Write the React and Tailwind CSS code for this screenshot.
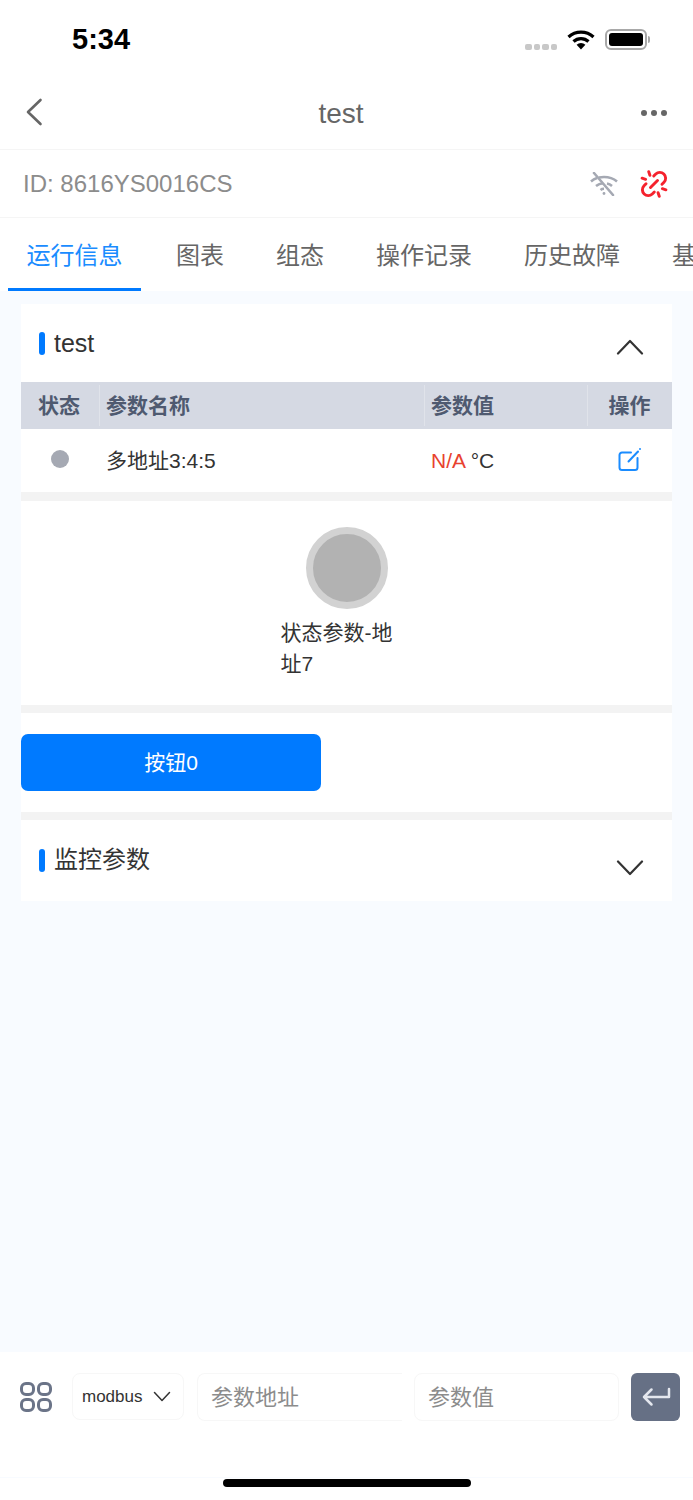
import React from "react";

const font = "font-['Liberation_Sans','Noto_Sans_CJK_SC',sans-serif]";

function StatusBar() {
  return (
    <div className="h-[75px] flex items-start justify-between pl-[72px] pr-[43px] pt-[23px]">
      <span className="text-[29px] leading-[33px] font-bold text-black">5:34</span>
      <div className="flex items-start pt-[6px]">
        <div className="flex gap-[2px] mt-[15px]">
          <span className="w-[6.5px] h-[6px] rounded-[2px] bg-[#c8c8c8]" />
          <span className="w-[6.5px] h-[6px] rounded-[2px] bg-[#c8c8c8]" />
          <span className="w-[6.5px] h-[6px] rounded-[2px] bg-[#c8c8c8]" />
          <span className="w-[6.5px] h-[6px] rounded-[2px] bg-[#c8c8c8]" />
        </div>
        <svg width="28" height="21" viewBox="0 0 28 21" className="ml-[10px]">
          <path d="M1.5 8a18.5 18.5 0 0 1 25 0" fill="none" stroke="#000" strokeWidth="3.2" />
          <path d="M6.5 12.5a11 11 0 0 1 15 0" fill="none" stroke="#000" strokeWidth="3.2" />
          <path d="M14 20.5l-4.4-4.7a6.2 6.2 0 0 1 8.8 0z" fill="#000" />
        </svg>
        <div className="flex items-center ml-[10px]">
          <div className="w-[42px] h-[21px] rounded-[6px] border-2 border-[#a8a8a8] p-[2px]">
            <div className="w-full h-full rounded-[3px] bg-black" />
          </div>
          <span className="w-[2px] h-[7px] rounded-r-[2px] bg-[#a8a8a8] ml-[1px]" />
        </div>
      </div>
    </div>
  );
}

function NavBar() {
  return (
    <div className="h-[75px] flex items-center justify-between border-b border-[#f5f5f5] pl-[25px] pr-[26px]">
      <svg width="18" height="28" viewBox="0 0 18 28">
        <path d="M15.5 2 3 14l12.5 12" fill="none" stroke="#666" strokeWidth="2.6" strokeLinecap="round" strokeLinejoin="round" />
      </svg>
      <span className="text-[28px] text-[#666] pt-[3px] pr-[2px]">test</span>
      <div className="flex gap-[4px] w-[26px] pt-[1px]">
        <span className="w-[6px] h-[6px] shrink-0 rounded-full bg-[#666]" />
        <span className="w-[6px] h-[6px] shrink-0 rounded-full bg-[#666]" />
        <span className="w-[6px] h-[6px] shrink-0 rounded-full bg-[#666]" />
      </div>
    </div>
  );
}

function WifiSlash() {
  return (
    <svg width="28" height="24" viewBox="0 0 28 24" fill="none" stroke="#a5a9b3" strokeWidth="2.6">
      <path d="M1 9.5C4.5 6.5 9 5 14 5c5 0 9.5 1.5 13 4.5" strokeDasharray="7 2 30" />
      <path d="M6 14c2-1.6 4.5-2.6 7-2.8M17 11.6c2 .4 3.700 1.300 5 2.400" />
      <path d="M10.500 18c1-.8 2.200-1.200 3.500-1.200" />
      <circle cx="14" cy="21.500" r="1.400" fill="#a5a9b3" stroke="none" />
      <path d="M4 1l19 22" strokeLinecap="round" />
    </svg>
  );
}

function BrokenLink() {
  return (
    <svg width="28" height="28" viewBox="0 0 24 24" fill="none" stroke="#f5222d" strokeWidth="2.5" strokeLinecap="round" strokeLinejoin="round">
      <path d="m18.840 12.250 1.720-1.710a5 5 0 0 0-.120-7.070 5 5 0 0 0-6.950 0l-1.720 1.710" />
      <path d="m5.170 11.750-1.710 1.710a5 5 0 0 0 .120 7.070 5 5 0 0 0 6.950 0l1.710-1.710" />
      <path d="M9 15l6-6" />
      <path d="M7.500 1.500 8.500 4.500M1.800 7 4.800 8" />
      <path d="M15.500 19.500 16.500 22.500M19.200 16 22.200 17" />
    </svg>
  );
}

function IdRow() {
  return (
    <div className="h-[68px] flex items-center justify-between border-b border-[#f5f5f5] pl-[23px] pr-[25px]">
      <span className="text-[24px] text-[#8c8c8c]">ID: 8616YS0016CS</span>
      <div className="flex items-center gap-[22px]">
        <WifiSlash />
        <BrokenLink />
      </div>
    </div>
  );
}

function Tabs() {
  const tabs = ["图表", "组态", "操作记录", "历史故障", "基本信息"];
  return (
    <div className="h-[73px] flex overflow-hidden pl-[8px]">
      <div className="w-[133px] shrink-0 h-full flex items-center justify-center border-b-[3px] border-[#007aff] text-[24px] text-[#1a8cff] pt-[6px]">
        运行信息
      </div>
      {tabs.map((t) => (
        <div key={t} className="shrink-0 h-full flex items-center pl-[35px] pr-[17px] text-[24px] text-[#666] pt-[3px]">
          {t}
        </div>
      ))}
    </div>
  );
}

function Chevron({ up, className }) {
  return (
    <svg width="28" height="16" viewBox="0 0 28 16" className={className}>
      <path d={up ? "M2 14.500 14 2l12 12.500" : "M2 1.500 14 14 26 1.500"} fill="none" stroke="#333" strokeWidth="2.2" strokeLinecap="round" strokeLinejoin="round" />
    </svg>
  );
}

function SectionTitle({ title, open }) {
  return (
    <div className="h-full flex items-start justify-between pl-[18px] pr-[28px]">
      <div className={open ? "flex items-center gap-[9px] pt-[24px]" : "flex items-center gap-[9px] pt-[25px]"}>
        <span className="w-[6px] h-[23px] rounded-full bg-[#007aff]" />
        <span className={open ? "text-[25px] leading-[30px] text-[#333]" : "text-[24px] leading-[30px] text-[#333]"}>{title}</span>
      </div>
      <Chevron up={open} className={open ? "mt-[35px]" : "mt-[40px]"} />
    </div>
  );
}

function EditIcon() {
  return (
    <svg width="24" height="24" viewBox="0 0 24 24" fill="none" stroke="#1a8cff" strokeWidth="2" strokeLinecap="round" strokeLinejoin="round">
      <path d="M13 5.500H4a2.500 2.500 0 0 0-2.500 2.500v12.500A2.500 2.500 0 0 0 4 23h13a2.500 2.500 0 0 0 2.500-2.500V11" />
      <path d="M10.500 14.500 20 4.500" />
      <circle cx="22" cy="2" r="1" fill="#1a8cff" stroke="none" />
    </svg>
  );
}

function ParamTable() {
  return (
    <>
      <div className="h-[47px] bg-[#d5d9e3] flex items-center text-[21px] font-bold text-[#4f5a70]">
        <div className="w-[79px] h-[41px] flex items-center justify-center pr-[2px] border-r border-[#e0e3ea]">状态</div>
        <div className="w-[325px] h-[41px] flex items-center pl-[6px] border-r border-[#e0e3ea]">参数名称</div>
        <div className="w-[163px] h-[41px] flex items-center pl-[6px] border-r border-[#e0e3ea]">参数值</div>
        <div className="flex-1 h-[41px] flex items-center justify-center pr-[1px]">操作</div>
      </div>
      <div className="h-[63px] flex items-center text-[21px] text-[#333]">
        <div className="w-[79px] flex justify-center pr-[2px] -mt-[4px]">
          <span className="w-[18px] h-[18px] rounded-full bg-[#a5a9b3]" />
        </div>
        <div className="w-[325px] pl-[6px]">多地址3:4:5</div>
        <div className="w-[163px] pl-[6px]">
          <span className="text-[#e8422f]">N/A</span> °C
        </div>
        <div className="flex-1 flex justify-center -mt-[4px]">
          <EditIcon />
        </div>
      </div>
    </>
  );
}

function BottomBar() {
  return (
    <div className="h-[126px] bg-white border-b border-[#f8fbff] flex items-start pt-[21px] pl-[20px]">
      <div className="grid grid-cols-2 gap-[2px] mt-[9px]">
        <span className="w-[15px] h-[14px] rounded-[6px] border-[3px] border-[#6b7488]" />
        <span className="w-[15px] h-[14px] rounded-[6px] border-[3px] border-[#6b7488]" />
        <span className="w-[15px] h-[14px] rounded-[6px] border-[3px] border-[#6b7488]" />
        <span className="w-[15px] h-[14px] rounded-[6px] border-[3px] border-[#6b7488]" />
      </div>
      <div className="ml-[20px] w-[112px] h-[47px] rounded-[8px] border border-[#f7f7f7] flex items-center justify-between pl-[9px] pr-[12px] text-[17px] text-[#333]">
        modbus
        <svg width="18" height="11" viewBox="0 0 18 11">
          <path d="M1.500 1.500 9 9.500l7.500-8" fill="none" stroke="#333" strokeWidth="1.500" strokeLinecap="round" strokeLinejoin="round" />
        </svg>
      </div>
      <div className="ml-[13px] w-[205px] h-[48px] rounded-l-[8px] border border-r-0 border-[#f7f7f7] flex items-center pl-[13px] text-[22px] text-[#8c8c8c]">
        参数地址
      </div>
      <div className="ml-[12px] w-[205px] h-[48px] rounded-[8px] border border-[#f7f7f7] flex items-center pl-[13px] text-[22px] text-[#8c8c8c]">
        参数值
      </div>
      <div className="ml-[12px] w-[49px] h-[48px] rounded-[6px] bg-[#667085] flex items-center justify-center">
        <svg width="30" height="20" viewBox="0 0 30 20">
          <path d="M28 2v8H3M10.500 2.500 3 10l7.500 7.500" fill="none" stroke="#e4e7ee" strokeWidth="2.500" strokeLinejoin="round" strokeLinecap="round" />
        </svg>
      </div>
    </div>
  );
}

export default function App() {
  return (
    <div className={`${font} w-[693px] h-[1500px] flex flex-col bg-white overflow-hidden`}>
      <StatusBar />
      <NavBar />
      <IdRow />
      <Tabs />
      <main className="flex-1 bg-[#f8fbff] px-[21px] pt-[13px]">
        <div className="bg-white">
          <div className="h-[78px]">
            <SectionTitle title="test" open />
          </div>
          <ParamTable />
          <div className="h-[9px] bg-[#f3f3f3]" />
          <div className="h-[204px] flex flex-col items-center pt-[26px]">
            <div className="w-[82px] h-[82px] rounded-full bg-[#b2b2b2] border-[7px] border-[#d2d2d2]" />
            <div className="w-[130px] mt-[8px] text-[21px] leading-[31px] text-[#333] -translate-x-[1px]">状态参数-地址7</div>
          </div>
          <div className="h-[8px] bg-[#f3f3f3]" />
          <div className="h-[99px] pt-[21px]">
            <button className="w-[300px] h-[57px] rounded-[7px] bg-[#007aff] text-white text-[21px]">按钮0</button>
          </div>
          <div className="h-[8px] bg-[#f3f3f3]" />
          <div className="h-[81px]">
            <SectionTitle title="监控参数" />
          </div>
        </div>
      </main>
      <BottomBar />
      <div className="h-[22px] bg-white flex justify-center">
        <span className="w-[248px] h-[8px] mt-[1px] rounded-full bg-black" />
      </div>
    </div>
  );
}
